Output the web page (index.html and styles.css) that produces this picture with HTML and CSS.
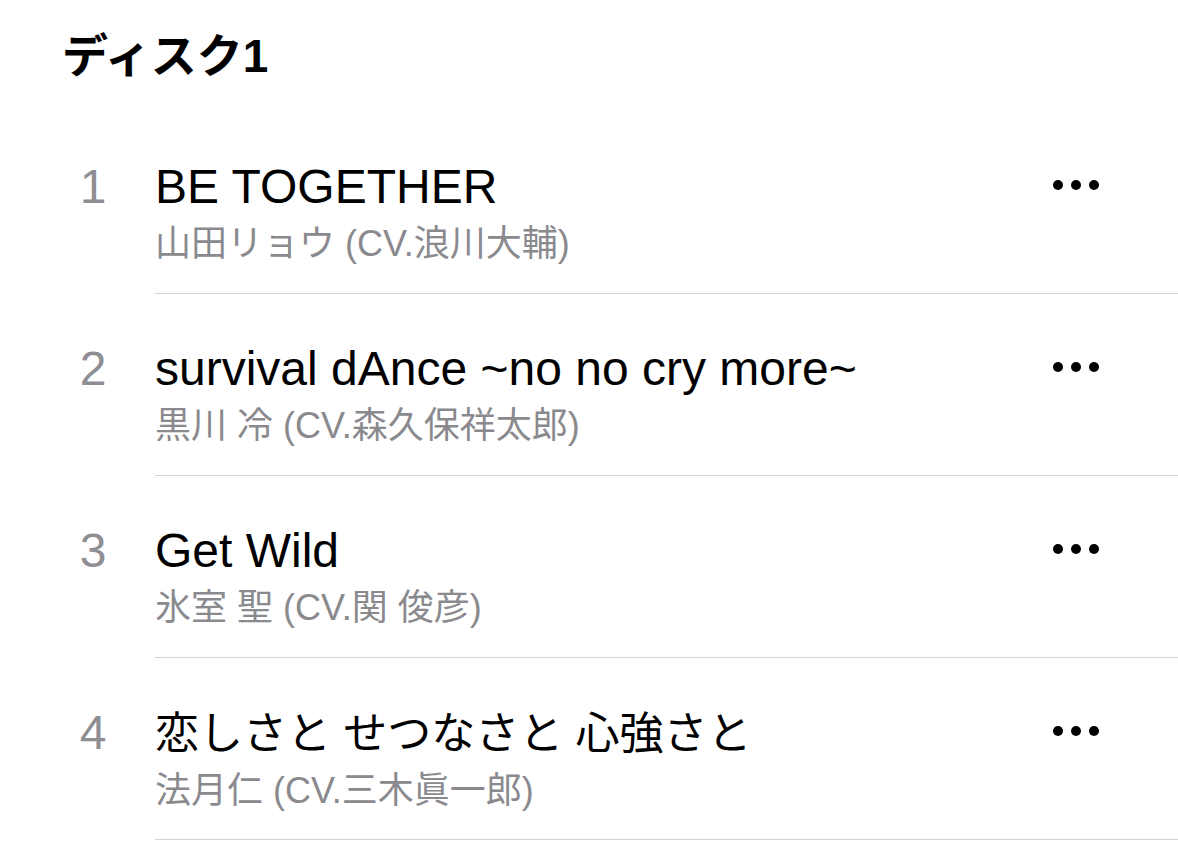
FILE: index.html
```html
<!DOCTYPE html>
<html lang="ja">
<head>
<meta charset="utf-8">
<link rel="stylesheet" href="styles.css">
</head>
<body>
<main class="disc">
  <h2 class="disc-title">ディスク1</h2>
  <ol class="tracks">
    <li class="track">
      <span class="num">1</span>
      <div class="body">
        <div class="info">
          <div class="name">BE TOGETHER</div>
          <div class="artist">山田リョウ (CV.浪川大輔)</div>
        </div>
        <span class="more"><i></i><i></i><i></i></span>
      </div>
    </li>
    <li class="track">
      <span class="num">2</span>
      <div class="body">
        <div class="info">
          <div class="name">survival dAnce ~no no cry more~</div>
          <div class="artist">黒川 冷 (CV.森久保祥太郎)</div>
        </div>
        <span class="more"><i></i><i></i><i></i></span>
      </div>
    </li>
    <li class="track">
      <span class="num">3</span>
      <div class="body">
        <div class="info">
          <div class="name">Get Wild</div>
          <div class="artist">氷室 聖 (CV.関 俊彦)</div>
        </div>
        <span class="more"><i></i><i></i><i></i></span>
      </div>
    </li>
    <li class="track">
      <span class="num">4</span>
      <div class="body">
        <div class="info">
          <div class="name"><span class="ja">恋しさと せつなさと 心強さと</span></div>
          <div class="artist">法月仁 (CV.三木眞一郎)</div>
        </div>
        <span class="more"><i></i><i></i><i></i></span>
      </div>
    </li>
  </ol>
</main>
</body>
</html>
```
FILE: styles.css
```css
html, body {
  margin: 0;
  padding: 0;
  background: #ffffff;
}
body {
  font-family: "Liberation Sans", "Noto Sans CJK JP", sans-serif;
  color: #000;
  width: 1178px;
  height: 851px;
  overflow: hidden;
}
.disc {
  padding: 28px 0 0 62px;
}
.disc-title {
  margin: 0;
  font-size: 46px;
  font-weight: 700;
  line-height: 56px;
}
.tracks {
  list-style: none;
  margin: 28px 0 0 0;
  padding: 0;
}
.track {
  display: flex;
  height: 182px;
  box-sizing: border-box;
  padding-top: 47px;
}
.num {
  width: 62px;
  text-align: center;
  color: #8e8e93;
  font-size: 48px;
  line-height: 56px;
  margin-right: 31px;
}
.body {
  flex: 1;
  display: flex;
  align-items: flex-start;
  border-bottom: 1.5px solid #d1d1d6;
}
.info {
  flex: 1;
}
.name {
  font-size: 48px;
  line-height: 56px;
  color: #000;
}
.name .ja {
  font-size: 44px;
}
.artist {
  font-size: 36px;
  line-height: 44px;
  color: #8a8a8e;
  margin-top: 7px;
}
.more {
  display: flex;
  gap: 8px;
  margin: 21px 79px 0 0;
}
.more i {
  width: 10px;
  height: 10px;
  border-radius: 50%;
  background: #000;
}
```
